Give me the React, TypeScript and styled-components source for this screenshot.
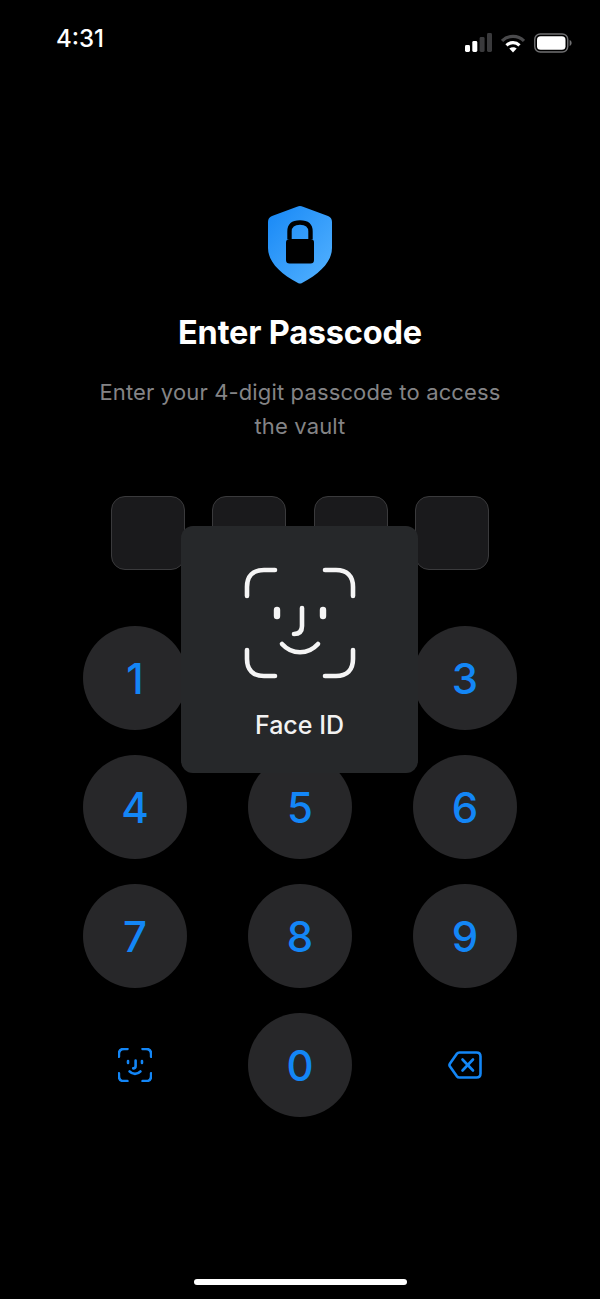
import React from "react";
import styled, { createGlobalStyle } from "styled-components";

const Global = createGlobalStyle`
  html, body { margin: 0; padding: 0; background: #000; }
  #root { width: 600px; height: 1299px; }
  * { box-sizing: border-box; }
`;

const Screen = styled.div`
  position: relative;
  width: 600px;
  height: 1299px;
  background: #000;
  overflow: hidden;
  display: flex;
  flex-direction: column;
  align-items: center;
  font-family: Inter, "Liberation Sans", sans-serif;
`;

const StatusBar = styled.div`
  width: 100%;
  height: 76px;
  padding: 25px 28px 0 56px;
  display: flex;
  justify-content: space-between;
  align-items: flex-start;
  color: #fff;
`;

const Time = styled.div`
  font-size: 24px;
  font-weight: 500;
  line-height: 28px;
`;

const StatusIcons = styled.div`
  display: flex;
  align-items: center;
  gap: 9px;
  padding-top: 8px;
`;

const ShieldWrap = styled.div`
  margin-top: 130px;
  height: 79px;
  display: flex;
`;

const Title = styled.h1`
  margin: 30px 0 0;
  font-size: 32.5px;
  line-height: 36px;
  font-weight: 700;
  color: #fff;
  letter-spacing: -0.2px;
`;

const Subtitle = styled.p`
  margin: 24px 0 0;
  width: 440px;
  text-align: center;
  font-size: 22px;
  line-height: 34px;
  font-weight: 400;
  letter-spacing: 0.14px;
  color: #848486;
`;

const Boxes = styled.div`
  margin-top: 53px;
  display: flex;
  gap: 27.3px;
`;

const Box = styled.div`
  width: 74px;
  height: 74px;
  border-radius: 14px;
  background: #1a1a1c;
  border: 1px solid #3a3a3c;
`;

const Keypad = styled.div`
  margin-top: 56px;
  display: grid;
  grid-template-columns: repeat(3, 104px);
  grid-auto-rows: 104px;
  column-gap: 61px;
  row-gap: 25px;
`;

const Key = styled.div<{ $plain?: boolean }>`
  width: 104px;
  height: 104px;
  border-radius: 50%;
  display: flex;
  align-items: center;
  justify-content: center;
  background: ${(p) => (p.$plain ? "transparent" : "#272729")};
  color: #1386f6;
  font-size: 42px;
  font-weight: 450;
`;

const FaceIdToast = styled.div`
  position: absolute;
  left: 181px;
  top: 526px;
  width: 237px;
  height: 247px;
  border-radius: 12px;
  background: #26282a;
  display: flex;
  flex-direction: column;
  align-items: center;
  padding-top: 41px;
`;

const ToastLabel = styled.div`
  margin-top: 31px;
  font-size: 25px;
  line-height: 30px;
  font-weight: 500;
  color: #f2f2f2;
`;

const HomeIndicator = styled.div`
  position: absolute;
  left: 194px;
  top: 1279px;
  width: 213px;
  height: 6px;
  border-radius: 3px;
  background: #fff;
`;

const Signal = () => (
  <svg width="27" height="20" viewBox="0 0 27 20">
    <rect x="0" y="12" width="5" height="7" rx="1.4" fill="#fff" />
    <rect x="7.3" y="8" width="5" height="11" rx="1.4" fill="#fff" />
    <rect x="14.6" y="4" width="5" height="15" rx="1.4" fill="#3a3a3c" />
    <rect x="22" y="0" width="5" height="19" rx="1.4" fill="#3a3a3c" />
  </svg>
);

const Wifi = () => (
  <svg width="24" height="20" viewBox="0 0 24 20" fill="none" strokeLinecap="butt">
    <path d="M1 8C7 1.8 17 1.8 23 8" stroke="#4a4a4c" strokeWidth="3.2" />
    <path d="M5.5 12.3C9.2 8.8 14.8 8.8 18.5 12.3" stroke="#fff" strokeWidth="3.2" />
    <path d="M12 19.5L8.3 15.6C10.5 13.7 13.5 13.7 15.7 15.6Z" fill="#fff" />
  </svg>
);

const Battery = () => (
  <svg width="38" height="20" viewBox="0 0 38 20" fill="none">
    <rect x="0.75" y="1" width="33" height="18" rx="5.5" stroke="#707072" strokeWidth="1.4" />
    <rect x="3" y="3.2" width="28.5" height="13.6" rx="3.6" fill="#fff" />
    <path d="M35.6 7v6c1.2-.4 2-1.6 2-3s-.8-2.6-2-3Z" fill="#707072" />
  </svg>
);

const Shield = () => (
  <svg width="64" height="78" viewBox="0 0 64 78">
    <defs>
      <linearGradient id="sh" x1="0" y1="0" x2="1" y2="1">
        <stop offset="0" stopColor="#1788f6" />
        <stop offset="1" stopColor="#54b2ff" />
      </linearGradient>
    </defs>
    <path
      d="M32 0C33 0 34 .2 35 .7L60 10C62.6 11 64 13 64 16V42C64 55 53 67 34 77C32.7 77.7 31.3 77.7 30 77C11 67 0 55 0 42V16C0 13 1.4 11 4 10L29 .7C30 .2 31 0 32 0Z"
      fill="url(#sh)"
    />
    <path
      d="M21.5 33V25.5C21.5 19 25.5 16.5 32 16.5C38.5 16.5 42.5 19 42.5 25.5V33"
      fill="none"
      stroke="#000"
      strokeWidth="4.4"
    />
    <rect x="18" y="33" width="28" height="24.5" rx="3.5" fill="#000" />
  </svg>
);

const FaceGlyph = ({ size, color, sw, eye }: { size: number; color: string; sw: number; eye: number }) => (
  <svg width={size} height={size} viewBox="0 0 112 112" fill="none" stroke={color} strokeWidth={sw} strokeLinecap="round" strokeLinejoin="round">
    <path d="M3 29V20C3 9 9 3 20 3H31" />
    <path d="M81 3H92C103 3 109 9 109 20V29" />
    <path d="M3 83V92C3 103 9 109 20 109H31" />
    <path d="M81 109H92C103 109 109 103 109 92V83" />
    <path d="M33 43V49" strokeWidth={eye} />
    <path d="M79 43V49" strokeWidth={eye} />
    <path d="M58 41V59C58 65 55 67 50 67" />
    <path d="M38 77C48 88 64 88 74 77" />
  </svg>
);

const Backspace = () => (
  <svg width="34" height="28" viewBox="0 0 34 28" fill="none" stroke="#1386f6" strokeWidth="2.6" strokeLinecap="round" strokeLinejoin="round">
    <path d="M11.5 1.5H28.5C31 1.5 32.5 3 32.5 5.5V22.5C32.5 25 31 26.5 28.5 26.5H11.5C10.4 26.5 9.4 26 8.7 25.1L2 15.6C1.3 14.6 1.3 13.4 2 12.4L8.7 2.9C9.4 2 10.4 1.5 11.5 1.5Z" />
    <path d="M14.5 8.5L25 19.5" />
    <path d="M25 8.5L14.5 19.5" />
  </svg>
);

const digits = ["1", "2", "3", "4", "5", "6", "7", "8", "9"];

export default function App() {
  return (
    <Screen>
      <Global />
      <StatusBar>
        <Time>4:31</Time>
        <StatusIcons>
          <Signal />
          <Wifi />
          <Battery />
        </StatusIcons>
      </StatusBar>
      <ShieldWrap>
        <Shield />
      </ShieldWrap>
      <Title>Enter Passcode</Title>
      <Subtitle>Enter your 4-digit passcode to access the vault</Subtitle>
      <Boxes>
        <Box />
        <Box />
        <Box />
        <Box />
      </Boxes>
      <Keypad>
        {digits.map((d) => (
          <Key key={d}>{d}</Key>
        ))}
        <Key $plain>
          <FaceGlyph size={34} color="#1386f6" sw={8.5} eye={8.5} />
        </Key>
        <Key>0</Key>
        <Key $plain>
          <Backspace />
        </Key>
      </Keypad>
      <FaceIdToast>
        <FaceGlyph size={112} color="#f5f5f5" sw={4.6} eye={6.4} />
        <ToastLabel>Face ID</ToastLabel>
      </FaceIdToast>
      <HomeIndicator />
    </Screen>
  );
}
